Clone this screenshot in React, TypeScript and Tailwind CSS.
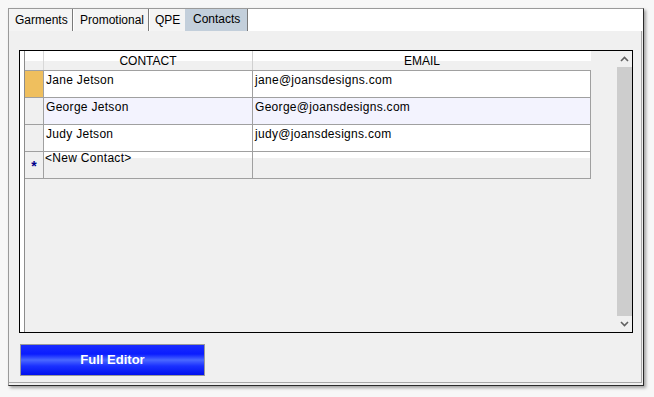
import React from "react";

const rows = [
  { name: "Jane Jetson", email: "jane@joansdesigns.com", bg: "bg-white", hdr: "bg-[#efbf5e]" },
  { name: "George Jetson", email: "George@joansdesigns.com", bg: "bg-[#f3f3fe]", hdr: "bg-[#f0f0f0]" },
  { name: "Judy Jetson", email: "judy@joansdesigns.com", bg: "bg-white", hdr: "bg-[#f0f0f0]" },
];

export default function App() {
  return (
    <div
      className="w-[654px] h-[397px] bg-[#f7f7f7] pt-[8px] pl-[8px]"
      style={{ fontFamily: '"Liberation Sans", Arial, sans-serif' }}
    >
      <div className="w-[636px] h-[378px] flex flex-col border border-t-[#9a9a9a] border-l-[#9a9a9a] border-r-[#2a2a2a] border-b-[#2a2a2a] shadow-[2px_2px_3px_rgba(0,0,0,0.35)] bg-[#f0f0f0]">
        {/* Tabs */}
        <div className="h-[22px] flex bg-white text-[12px] text-black shrink-0">
          <div className="w-[64px] bg-[#f4f4f4] border-r border-r-[#7a7a7a] flex items-end pb-[2px] pl-[6px]">Garments</div>
          <div className="w-[76px] bg-[#f4f4f4] border-l border-l-white border-r border-r-[#7a7a7a] flex items-end pb-[2px] pl-[6px]">Promotional</div>
          <div className="w-[36px] bg-[#f4f4f4] border-l border-l-white flex items-end pb-[2px] pl-[5px]">QPE</div>
          <div className="w-[63px] bg-[#c3cfdb] border-r border-r-[#7a7a7a] flex items-start pt-[1px] pl-[8px]">Contacts</div>
          <div className="flex-1 bg-white" />
        </div>
        {/* Panel */}
        <div className="flex-1 pr-[1px] pb-[2px]">
          <div className="h-full border-r border-b border-r-[#a8a8a8] border-b-[#a8a8a8] pl-[10px] pt-[19px] flex flex-col">
            {/* Grid */}
            <div className="w-[614px] h-[283px] border border-black flex bg-[#f0f0f0]">
              <div className="w-[5px] bg-white border-r border-r-[#8c8c8c]" />
              <div className="flex-1 flex flex-col text-[12px] tracking-[0.3px] text-black">
                {/* Header */}
                <div className="h-[19px] flex w-[566px] bg-[linear-gradient(to_bottom,#ffffff_0,#ffffff_10px,#f0f0f0_10px,#f0f0f0_100%)]">
                  <div className="w-[19px] border-r border-r-[#d8d8d8]" />
                  <div className="w-[209px] border-r border-r-[#d0d0d0] flex items-center justify-center tracking-normal">CONTACT</div>
                  <div className="flex-1 flex items-center justify-center tracking-normal">EMAIL</div>
                </div>
                <div className="w-[566px] border-t border-t-[#a0a0a0]">
                  {rows.map((r) => (
                    <div key={r.name} className="h-[27px] flex border-b border-b-[#a0a0a0]">
                      <div className={`w-[19px] border-r border-r-[#a0a0a0] ${r.hdr}`} />
                      <div className={`w-[209px] border-r border-r-[#a0a0a0] pl-[2px] ${r.bg}`}>{r.name}</div>
                      <div className={`flex-1 border-r border-r-[#a0a0a0] pl-[2px] ${r.bg}`}>{r.email}</div>
                    </div>
                  ))}
                  <div className="h-[27px] flex border-b border-b-[#a0a0a0]">
                    <div className="w-[19px] border-r border-r-[#a0a0a0] bg-[#f0f0f0] flex items-center justify-center pt-[2px] text-[#00008b] text-[14px] font-bold">*</div>
                    <div className="w-[209px] border-r border-r-[#a0a0a0] bg-[linear-gradient(to_bottom,#ffffff_0,#ffffff_6px,#f0f0f0_6px,#f0f0f0_100%)] pl-[1px] leading-[13px]">&lt;New Contact&gt;</div>
                    <div className="flex-1 border-r border-r-[#a0a0a0] bg-[linear-gradient(to_bottom,#ffffff_0,#ffffff_6px,#f0f0f0_6px,#f0f0f0_100%)]" />
                  </div>
                </div>
              </div>
              {/* Scrollbar */}
              <div className="w-[16px] flex flex-col items-stretch bg-[#f0f0f0]">
                <div className="h-[16px] flex items-center justify-center">
                  <svg width="9" height="6" viewBox="0 0 9 6"><path d="M1 5 L4.5 1.5 L8 5" stroke="#606060" strokeWidth="1.6" fill="none" /></svg>
                </div>
                <div className="flex-1 bg-[#cdcdcd] ml-[1px]" />
                <div className="h-[16px] flex items-center justify-center">
                  <svg width="9" height="6" viewBox="0 0 9 6"><path d="M1 1 L4.5 4.5 L8 1" stroke="#606060" strokeWidth="1.6" fill="none" /></svg>
                </div>
              </div>
            </div>
            {/* Button */}
            <div className="mt-[11px] ml-[1px] w-[185px] h-[32px] border border-[#9a9a9a] bg-[linear-gradient(to_bottom,#1a2cff_0%,#0a1cff_30%,#4a68ff_50%,#1a30ff_70%,#0010ee_100%)] flex items-center justify-center text-white font-bold text-[13px]">
              Full Editor
            </div>
          </div>
        </div>
      </div>
    </div>
  );
}
